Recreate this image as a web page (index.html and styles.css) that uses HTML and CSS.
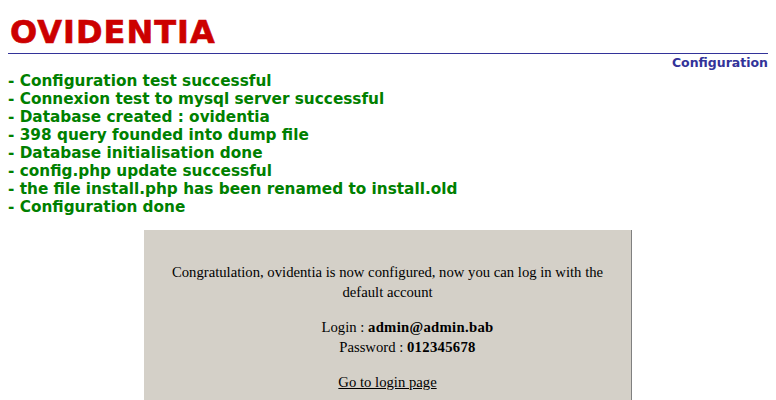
FILE: index.html
```html
<!DOCTYPE html>
<html lang="en">
<head>
  <meta charset="UTF-8">
  <title>Ovidentia - Configuration</title>
  <link rel="stylesheet" href="styles.css">
</head>
<body>

  <h1 class="logo">OVIDENTIA</h1>
  <div class="rule"></div>
  <div class="section">Configuration</div>

  <div class="steps">
    - Configuration test successful<br>
    - Connexion test to mysql server successful<br>
    - Database created : ovidentia<br>
    - 398 query founded into dump file<br>
    - Database initialisation done<br>
    - config.php update successful<br>
    - the file install.php has been renamed to install.old<br>
    - Configuration done
  </div>

  <div class="done">
    <p>Congratulation, ovidentia is now configured, now you can log in with the default account</p>
    <p class="account">Login : <b>admin@admin.bab</b><br>
    Password : <b>012345678</b></p>
    <p><a href="#">Go to login page</a></p>
  </div>

</body>
</html>
```

FILE: styles.css
```css
body {
  margin: 8px;
  background: #fff;
  font-family: "Liberation Serif", serif;
}

.logo {
  font-family: "DejaVu Sans", Verdana, sans-serif;
  font-weight: bold;
  font-size: 32px;
  letter-spacing: 1px;
  color: #cc0000;
  -webkit-text-stroke: 0.6px #cc0000;
  margin: 8px 0 0 2px;
  line-height: 32px;
}

.rule {
  border-top: 1px solid #333399;
  margin-top: 5px;
}

.section {
  text-align: right;
  font-family: "DejaVu Sans", Verdana, sans-serif;
  font-weight: bold;
  font-size: 12.5px;
  line-height: 15px;
  color: #333399;
  margin-top: 1px;
}

.steps {
  font-family: "DejaVu Sans", Verdana, sans-serif;
  font-weight: bold;
  font-size: 15.3px;
  line-height: 18px;
  color: #008000;
  margin-top: 2px;
}

.done {
  width: 488px;
  margin: 14px auto 0;
  background: #d4d0c8;
  border-right: 1px solid #808080;
  text-align: center;
  font-size: 14.7px;
  line-height: 20px;
  padding: 17px 20px 20px;
  box-sizing: border-box;
}

.done p {
  margin: 15px 0;
}

.done .account {
  padding-left: 40px;
}

.done .account b {
  letter-spacing: 0.3px;
}

.done a {
  color: #000;
}
```
